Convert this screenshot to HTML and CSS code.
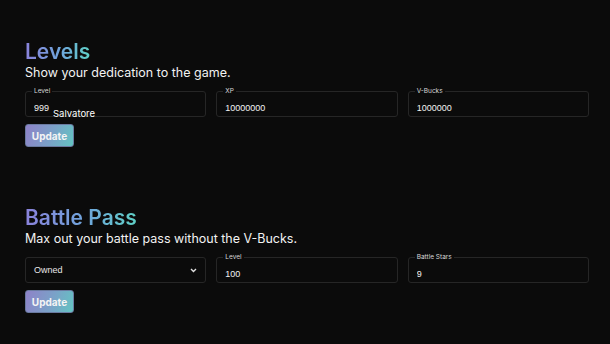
FILE: index.html
```html
<!DOCTYPE html>
<html lang="en">
<head>
  <meta charset="UTF-8">
  <meta name="viewport" content="width=device-width, initial-scale=1.0">
  <title>Levels</title>
  <link rel="stylesheet" href="styles.css">
</head>
<body>

  <section class="panel">
    <h2 class="title">Levels</h2>
    <p class="subtitle">Show your dedication to the game.</p>
    <div class="row">
      <fieldset class="field">
        <legend>Level</legend>
        <input type="text" value="999">
        <span class="hint">Salvatore</span>
      </fieldset>
      <fieldset class="field">
        <legend>XP</legend>
        <input type="text" value="10000000">
      </fieldset>
      <fieldset class="field">
        <legend>V-Bucks</legend>
        <input type="text" value="1000000">
      </fieldset>
    </div>
    <button class="update">Update</button>
  </section>

  <section class="panel panel-pass">
    <h2 class="title">Battle Pass</h2>
    <p class="subtitle">Max out your battle pass without the V-Bucks.</p>
    <div class="row">
      <div class="field select-field">
        <span>Owned</span>
        <svg width="7" height="5" viewBox="0 0 7 5"><path d="M1 1 L3.5 3.5 L6 1" fill="none" stroke="#e0e0e0" stroke-width="1.4"/></svg>
      </div>
      <fieldset class="field">
        <legend>Level</legend>
        <input type="text" value="100">
      </fieldset>
      <fieldset class="field">
        <legend>Battle Stars</legend>
        <input type="text" value="9">
      </fieldset>
    </div>
    <button class="update">Update</button>
  </section>

</body>
</html>
```

FILE: styles.css
```css
body {
  margin: 0;
  background-color: #0b0b0b;
  font-family: Inter, "Noto Sans", sans-serif;
  color: #f2f2f2;
}

.panel {
  padding: 39px 21px 0 25px;
}

.panel-pass {
  padding-top: 58px;
}

.title {
  margin: 0;
  font-size: 21px;
  font-weight: 600;
  line-height: 26px;
  background: linear-gradient(90deg, #8a82db 0%, #6fa6dc 55%, #5fd0c6 100%);
  -webkit-background-clip: text;
  background-clip: text;
  color: transparent;
  display: inline-block;
}

.subtitle {
  margin: 0;
  font-size: 12.5px;
  line-height: 16px;
}

.row {
  display: grid;
  grid-template-columns: repeat(3, 1fr);
  gap: 10px;
  margin-top: 7px;
}

.field {
  position: relative;
  margin: 0;
  padding: 0 8px;
  height: 29px;
  box-sizing: border-box;
  border: 1px solid #262626;
  border-radius: 3px;
  min-width: 0;
}

.field legend {
  padding: 0 2px;
  margin-left: -2px;
  font-size: 6.5px;
  line-height: 7px;
  color: #d8d8d8;
}

.field input {
  width: 100%;
  border: none;
  background: transparent;
  padding: 0;
  margin-top: 1px;
  color: #f2f2f2;
  font-family: "Liberation Sans", Arial, sans-serif;
  font-size: 9px;
  outline: none;
}

.hint {
  position: absolute;
  left: 27px;
  top: 13px;
  font-size: 9.5px;
  color: #ffffff;
}

.select-field {
  display: flex;
  align-items: center;
  justify-content: space-between;
  margin-top: 3px;
  height: 26px;
  font-family: "Liberation Sans", Arial, sans-serif;
  font-size: 9px;
  color: #e8e8e8;
}

.update {
  margin-top: 7px;
  width: 49px;
  height: 23px;
  padding: 0;
  border: 1px solid #6a7aa0;
  border-radius: 3px;
  background: linear-gradient(110deg, #8e82c8 0%, #7aa2c8 55%, #63c4c2 100%);
  color: #f4f4f4;
  font-family: Inter, "Noto Sans", sans-serif;
  font-size: 10px;
  font-weight: 700;
  cursor: pointer;
}
```
